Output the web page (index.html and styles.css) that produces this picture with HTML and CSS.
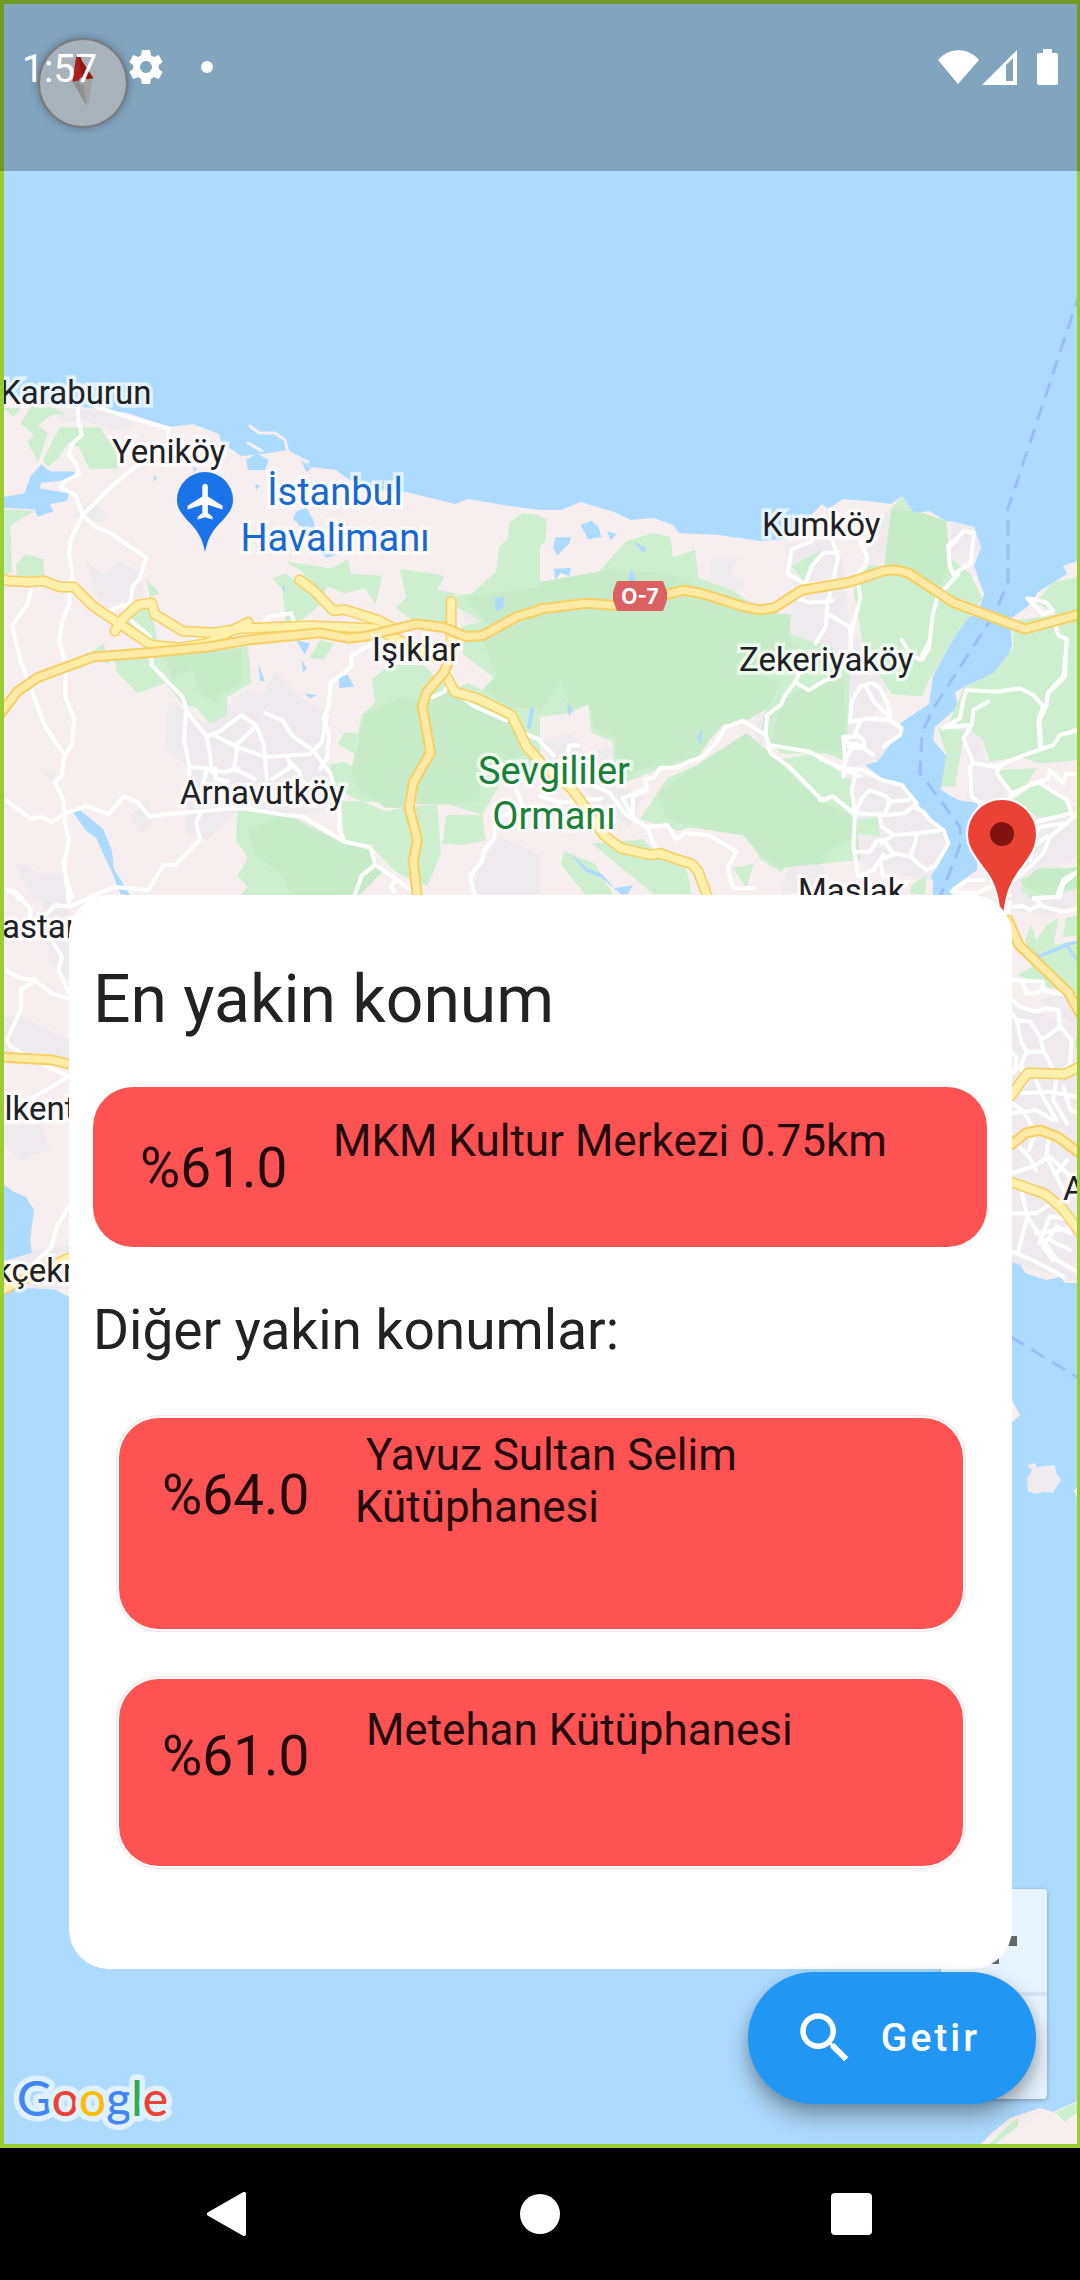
FILE: index.html
```html
<!DOCTYPE html>
<html lang="tr">
<head>
<meta charset="utf-8">
<meta name="viewport" content="width=device-width, initial-scale=1">
<title>En yakin konum</title>
<link rel="stylesheet" href="styles.css">
</head>
<body>
<div class="screen">
  <main class="stage">
    <svg class="map" viewBox="0 0 1080 2148" preserveAspectRatio="xMidYMin slice" role="img" aria-label="Harita">
      <defs>
        <g id="highways">
          <g transform="translate(0 340) scale(.3444 .3571)">
            <path d="M-20 660 20 674 90 678 125 674 175 692 215 692 270 745 340 790 440 855 520 862 600 850 720 790"/>
            <path d="M334 815 352 785 400 742 440 736 450 768 530 815 620 820 700 808 900 800 1090 808 1200 860 1260 890"/>
            <path d="M870 672 910 700 968 758 1000 755 1100 785 1140 805"/>
            <path d="M1310 732V880L1290 930 1320 985 1390 1005 1485 1050 1530 1140 1568 1180"/>
          </g>
          <g transform="translate(540 280) scale(.3444 .4082)">
            <path d="M0 1185 90 1245 130 1290 185 1360 235 1392 320 1408 350 1405 400 1420 440 1430 460 1450 490 1520"/>
          </g>
          <path d="M1011 1096 1022 1080 1028 1073 1065 1074 1085 1064M1011 1182 1045 1194 1062 1208 1082 1235M0 1291 32 1275 69 1258"/>
        </g>
        <g id="motorways">
          <g transform="translate(0 340) scale(.3444 .3571)">
            <path d="M-10 1060 50 985 110 945 270 888 440 875 600 860 720 840 930 820 1010 835 1060 830 1210 795 1290 805 1350 830 1400 828 1500 775 1570 755"/>
            <path d="M1310 880 1290 930 1240 985 1226 1025 1250 1155 1200 1240 1188 1310 1212 1400 1200 1460 1214 1580"/>
          </g>
          <g transform="translate(540 280) scale(.3444 .4082)">
            <path d="M0 806 135 792 215 797 370 770 415 760 470 768 590 800 640 808 680 803 760 760 900 740 1000 712 1035 710 1070 718 1200 790 1408 855 1580 816"/>
          </g>
          <path d="M1008 920 1019 945 1068 992 1085 1022M1011 1145 1026 1133 1040 1130 1058 1137 1085 1157M0 1057 52 1060 69 1064"/>
        </g>
      </defs>

      <rect class="water" width="1080" height="2148"/>

      <g class="land">
        <path d="M0 396 50 404 92 408 128 413 169 427 193 424 219 434 221 442 241 456 262 454 288 450 310 467 336 470 351 481 379 490 406 492 455 504 468 499 503 505 540 510 561 510 581 502 614 512 631 520 654 518 673 525 679 533 719 535 760 541 788 539 822 504 828 509 843 499 867 501 891 504 902 496 914 513 929 511 946 521 974 527 981 547 974 566 984 594 977 615 967 617 952 641 933 676 929 704 902 722 883 747 866 766 887 782 903 785 917 803 937 828 948 842 935 870 925 872 933 880 930 1290 69 1297 52 1288 21 1287 0 1291Z"/>
        <path d="M1080 560 1063 566 1067 574 1038 592 1027 607 1010 619 1012 645 1005 668 991 676 970 684 955 692 958 707 935 727 933 740 947 757 941 790 958 800 978 803 977 870 952 888 948 1250 1011 1262 1020 1263 1025 1273 1046 1280 1060 1277 1065 1283 1080 1283Z"/>
        <path d="M977 2148 993 2132 1010 2118 1040 2108 1053 2112 1080 2100V2148ZM1011 1398 1020 1415 1011 1423ZM1074 1490 1080 1486V1505Z"/>
      </g>
      <path class="urban" d="M1027 1465 1036 1463 1036 1467 1055 1465 1056 1472 1061 1480 1053 1493 1042 1492 1036 1494 1028 1491 1027 1478 1032 1470Z"/>
      <path class="park" d="M985 2148 1010 2124 1018 2118V2126L994 2145ZM1043 2123 1055 2112 1065 2122 1078 2112V2102L1052 2114Z"/>

      <g class="urban">
        <g transform="translate(0 340) scale(.3444 .3571)">
          <path d="M160 190 360 205 390 240 330 250 250 228 170 225ZM210 495 270 445 315 500 290 510ZM250 620 300 660 340 620 410 650 420 720 360 735 290 730ZM490 1010 600 1075 700 985 760 995 800 930 870 1000 960 1050 950 1180 1000 1290 880 1330 700 1310 600 1400 540 1380 550 1200 480 1140ZM40 1460 130 1500 200 1490V1568H100ZM1340 740 1370 735 1400 790 1350 795ZM1390 1480 1450 1390 1568 1440V1568H1370ZM380 1330 430 1290 440 1350 410 1385ZM120 1205 160 1215 150 1240Z"/>
        </g>
        <g transform="translate(540 280) scale(.3444 .4082)">
          <path d="M495 685 575 680 555 720 600 745 545 775 500 730ZM710 650 860 630 880 700 900 860 960 900 940 980 850 1000 760 940 720 860 740 770ZM900 930 1040 950 960 1080 1050 1100 980 1180 880 1200 870 1100 900 1080ZM630 1060 690 1070 680 1130 620 1155ZM960 600 1020 560 1000 690 950 710ZM1190 590 1260 605 1280 660 1200 710ZM0 1130 90 1110 130 1160 220 1140 210 1240 300 1260 260 1340 130 1250 60 1220ZM730 1410 780 1380 830 1450 800 1500H700ZM890 1210 1040 1230 1100 1290 1190 1380 1130 1470 1000 1450 920 1420 910 1300 930 1290Z"/>
        </g>
        <g transform="translate(820 640) scale(.3333)">
          <path d="M420 220 460 210 500 250 480 310 510 380 540 400 560 480 440 480 450 380 425 290ZM500 470 640 490 780 500V640L600 780H560L480 600ZM590 350 610 280 640 340Z"/>
        </g>
        <path d="M1011 880H1080V1283L1011 1262ZM0 1020 18 1015 69 1040V1060L0 1055ZM20 860 69 900V980L48 960 50 920ZM0 1125 40 1125 50 1150 20 1160 0 1140ZM0 1255 69 1245V1290L0 1287Z"/>
      </g>

      <path class="land" d="M1011 910 1050 915 1080 905V990L1040 1000 1080 1030 1011 1000Z"/>
      <g class="park">
        <g transform="translate(0 340) scale(.3444 .3571)">
          <path d="M10 190 60 190 40 215ZM90 185 160 190 190 208 150 210 110 240 140 262 110 340 80 285 100 265 60 235ZM175 245 290 245 310 275 330 280 345 360 260 362 230 300 200 285 170 330 140 355 125 340 150 285ZM12 475 100 478 30 520 35 650 12 660ZM45 630 75 600 125 615 130 662 50 662ZM425 672 465 710 435 720ZM790 665 830 655 900 700 880 650 830 620 960 640 1010 615 1020 655 1110 660 1090 740 1060 695 1000 710 950 690 930 740 870 790 830 790 820 700ZM1160 640 1290 660 1270 700 1330 710 1300 790 1200 790 1150 750 1180 720ZM1568 490 1520 485 1480 510 1475 555 1450 580 1440 650 1370 710 1320 715 1330 750 1400 790 1340 800 1345 880 1440 950 1420 990 1360 960 1320 980 1280 960 1230 910 1130 910 1080 950 1090 1015 1050 1050 1040 1100 1030 1200 1000 1180 960 1190 960 1240 1020 1280 1120 1320 1200 1305 1300 1300 1400 1330 1460 1230 1568 1210ZM380 740 440 760 460 855 400 850 370 790ZM260 880 300 850 320 910ZM330 880 560 870 720 860 730 960 660 1000 660 1050 610 1075 570 1030 530 1020 480 960 400 990 340 930ZM900 890 930 840 970 850 940 895ZM980 1130 1000 1100 1040 1100 1030 1160ZM690 1320 820 1320 1000 1410 1080 1430 1110 1490 1050 1510 1030 1568 690 1568 720 1530 690 1500 720 1450 685 1400ZM990 1290 1270 1300 1280 1440 1240 1530 1150 1490 1080 1420 1000 1400ZM1285 1410 1295 1330 1400 1330 1410 1400 1340 1415Z"/>
        </g>
        <g transform="translate(540 280) scale(.3444 .4082)">
          <path d="M0 580 20 585 15 640 0 655ZM0 740 160 725 250 640 330 620 380 630 385 680 450 660 460 730 560 760 640 810 720 820 730 870 850 900 900 960 890 1180 830 1160 700 1160 640 1110 660 1040 600 1020 520 1090 460 1170 340 1200 220 1240 210 1130 150 1110 140 1040 90 1060 0 1070ZM1020 560 1050 530 1085 570 1180 590 1190 680 1250 720 1285 780 1200 880 1130 980 1110 1020 1020 1015 940 900 910 760 950 700 1000 700ZM730 700 820 660 770 740ZM660 1180 800 1160 910 1230 930 1420 820 1430 730 1420 700 1450 640 1420 610 1370 520 1320 400 1350 290 1320 370 1220 480 1180ZM150 1380 300 1370 350 1420 420 1420 440 1505 330 1505ZM70 1400 160 1430 210 1505 130 1505 60 1430ZM560 1440 620 1430 600 1490ZM1550 730 1490 740 1440 790 1500 820 1370 835 1375 900 1320 960 1230 1000 1190 1080 1250 1100 1330 1160 1450 1140 1568 1090V730ZM1160 1110 1220 1110 1200 1240 1165 1240 1180 1160Z"/>
        </g>
        <g transform="translate(820 640) scale(.3333)">
          <path d="M355 265 435 270 405 440 365 430 382 350ZM500 260 620 230 700 280 780 270V360L660 370 600 350 510 365 490 310ZM530 390 650 385 610 450 560 450ZM580 480 650 430 740 480 750 530 650 530ZM600 720 660 690 780 680V740L680 780H630ZM105 540 175 530 180 590 110 580ZM275 735 320 705 315 765 270 760Z"/>
        </g>
        <path d="M1020 890 1040 868 1080 868V890L1050 888 1040 900ZM1025 940 1031 925 1036 940 1047 925 1058 918 1054 945 1080 940V1000L1062 993 1035 960ZM1080 915V935L1063 937 1066 918ZM1018 975 1035 965 1075 990 1050 988ZM1074 1045 1080 1030V1055Z"/>
      </g>
      <g class="forest">
        <g transform="translate(0 340) scale(.3444 .3571)">
          <path d="M480 880 700 865 700 960 620 1010 580 990 560 920 500 950ZM1060 1050 1160 1000 1220 1010 1250 1150 1190 1240 1180 1310 1120 1310 1040 1260 1020 1200ZM1240 1020 1300 980 1350 1010 1470 1060 1530 1160 1400 1200 1390 1290 1320 1300 1210 1300ZM1400 830 1568 760V1030L1480 1030 1400 980 1440 940ZM720 1370 820 1330 1000 1410 1080 1430 1110 1490 1030 1568H850L820 1500 740 1440ZM1350 720 1568 690V740L1420 800Z"/>
        </g>
        <g transform="translate(540 280) scale(.3444 .4082)">
          <path d="M0 740 200 710 380 720 480 760 640 815 730 820 720 870 740 900 600 960 700 980 660 1050 600 1080 530 1090 450 1170 330 1190 220 1220 220 1120 160 1100 140 1040 90 1050 60 980 0 1060ZM1020 560 1110 570 1180 590 1190 690 1160 750 1080 710 1000 700ZM700 1030 760 1000 880 970 890 1160 780 1150 670 1140ZM670 1160 750 1230 820 1280 900 1310 910 1370 850 1390 820 1430 700 1440 640 1410 590 1360 430 1340 370 1320 340 1260 470 1180 600 1110ZM1400 1480 1440 1445 1568 1440V1480L1480 1510Z"/>
        </g>
      </g>

      <g class="water">
        <g transform="translate(0 340) scale(.3444 .3571)">
          <path d="M10 440 70 430 90 380 120 348 145 368 215 368 220 385 170 395 120 400 115 415 200 430 195 450 145 460 155 480 110 495 100 475 10 470ZM715 335 745 318 780 335 770 365 720 365ZM860 480 890 470 910 505 920 550 880 530 850 500ZM740 405 755 405 745 420ZM875 340 905 360 890 370ZM925 590 985 600 950 610ZM1435 722 1465 720 1460 750 1440 760ZM860 840 900 850 885 880ZM875 895 890 920 880 930ZM750 905 768 955 755 955ZM985 945 1010 938 1028 970 985 975ZM885 990 920 995 900 1003ZM1540 1030 1552 1030 1540 1090 1530 1085ZM210 1320 235 1318 300 1370 325 1430 330 1480 378 1555 350 1552 325 1490 300 1440 280 1395 250 1375ZM445 382 455 382 450 398ZM820 690 828 685 824 710ZM560 355 572 360 564 370Z"/>
        </g>
        <g transform="translate(540 280) scale(.3444 .4082)">
          <path d="M118 600 150 590 170 605 178 630 140 635ZM38 655 45 630 90 630 85 645 50 675ZM195 615 222 622 205 638ZM40 708 90 705 85 725 60 718 45 735ZM270 640 310 658 300 668ZM255 740 265 705 280 735ZM78 1035 95 1050 85 1070ZM455 1120 472 1098 468 1138ZM85 1402 135 1440 180 1455 215 1490 270 1483 255 1505H235L180 1465 130 1448Z"/>
        </g>
        <path d="M0 1182 14 1192 26 1197 34 1210 30 1240 32 1253 0 1262Z"/>
      </g>
      <g class="stream">
        <path d="M1031 952 1040 956 1060 948 1072 943 1080 942M1066 944 1080 964"/>
      </g>

      <g class="coast">
        <path d="M250 426 259 433 275 433 285 440 288 452 308 462M248 443 262 451"/>
      </g>

      <g class="roads">
        <g transform="translate(0 340) scale(.3444 .3571)">
          <path d="M225 185 228 230 238 265 210 290 200 320 220 345 230 375 190 395 175 412 220 435 240 490 205 560 200 600 210 650 200 740 180 790 172 850 190 900 190 1000 215 1060 210 1130 185 1170 180 1220 160 1238 185 1290 190 1360 200 1400 185 1480 210 1560"/>
          <path d="M275 185 380 218 490 247 485 300 400 350 330 405 240 490 280 525 320 540 425 610 405 670 385 690 380 730 360 760 385 790 435 830 440 910 490 960 530 1000 545 1045 600 1110 610 1160 615 1210"/>
          <path d="M90 700 80 740 35 800 60 900 130 1080 185 1160M310 762 360 742M730 800 755 800 780 775 845 765 855 795M10 1285 90 1340 120 1335 150 1350 190 1325 250 1305 315 1328 360 1278 400 1295 435 1335 480 1328 700 1310 830 1330 880 1335 1000 1405 1075 1420 1090 1470 1150 1510 1210 1550"/>
          <path d="M600 1110 640 1095 700 1050 745 1080 765 1130 775 1230M625 1108 690 1140 770 1168 860 1162 900 1160 935 1125 950 1050 940 1090M770 1045 820 1065 850 1110 910 1150 960 1215 985 1310 985 1370 1000 1405M745 1080 690 1130 680 1200 740 1230M1080 850 1020 885 1020 915 960 960 955 1020 940 1060 955 1100 950 1170 930 1200M550 1195 600 1200 650 1210 690 1200M540 1040 535 1120 550 1195 548 1240M625 1200 625 1230 660 1235M590 1240 600 1205M835 1170 845 1195 790 1230M845 1185 870 1210 880 1240M585 1320 570 1350 580 1400 510 1470 475 1470 430 1540 330 1532 260 1560M1090 1470 1050 1500 1025 1568M1150 1510 1135 1530 1145 1545M1500 1260 1520 1310 1440 1340 1435 1395 1405 1430 1400 1460 1365 1500 1380 1560M1568 1120 1530 1105M1255 1000 1290 985 1310 950 1310 930M1320 985 1375 1025 1470 1065M12 1540 45 1545 55 1568"/>
        </g>
        <g transform="translate(540 280) scale(.3444 .4082)">
          <path d="M790 640 730 660 720 720 770 745 850 745M850 640 865 680 855 720 835 790 830 850 800 890M770 745 790 700 820 670 865 665M930 640 950 680 945 700 920 720 930 780 905 860 900 900M735 775 780 790 850 785M840 820 900 850 905 920M1200 640 1185 650 1190 700 1200 720 1250 695 1260 620 1230 615 1195 650M1215 720 1155 775 1140 820 1130 900 1110 930M870 970 830 980 780 1005 740 985 710 1020 700 1040 660 1065 655 1110 670 1160 720 1190 820 1275 850 1265 910 1305M740 985 755 960M655 1115 590 1080 540 1095 510 1135 470 1170 430 1180 400 1195 350 1195 330 1218 305 1225 310 1245 240 1270M670 1140 780 1155 880 1200 930 1215M240 1270 270 1315 270 1265 310 1250M160 1240 200 1255 250 1310 310 1340 370 1335 395 1370 420 1355 490 1360 570 1400 545 1440 560 1490 620 1490M310 1340 340 1400M0 1265 60 1280 180 1270M0 1130 40 1165M80 1160 85 1140 110 1140M1495 840 1505 870 1530 880 1520 970 1475 1010 1470 1040 1450 1080 1455 1140M1415 780 1440 800 1460 820 1490 810 1470 790 1420 780"/>
        </g>
        <g transform="translate(820 640) scale(.3333)">
          <path d="M150 130 120 140 95 185 90 245 150 235 210 240 245 265M140 145 165 190 210 230 205 195 180 145 160 130M120 245 105 280 130 300 135 320 85 310 70 290 110 290M245 265 240 285 190 320M70 290 75 350 70 410M110 310 85 340 70 380M85 320 130 325 160 345M0 355 65 385 130 390 185 420 245 435 290 490 255 520 205 525 110 520 100 520M110 515 125 475 150 450 200 470 210 485 195 520M205 485 265 480M105 410 95 450 105 520 100 620 115 710M0 480 40 470 100 520M180 530 185 560 220 585 290 580 285 610 270 650 320 690 345 680 385 610 370 570 330 540 310 515 280 500M105 635 150 635 170 605 190 600 220 640 270 650M185 610 220 585M290 580 370 570M190 710 180 660 220 645M115 710 160 690 190 645M370 265 420 235 430 180 440 150 530 155 600 145 640 165 670 200 655 240 660 320M370 262 455 255 460 210 505 185M455 255 430 295 460 370 450 380 455 470 480 490M460 370 530 380 600 350 700 315 720 285 780 270M780 405 740 400 730 430 690 390 685 415 620 440 570 470M540 380 530 400 575 460 620 440M660 430 740 480 755 520 650 545M780 510 740 550 690 590 670 640 630 680 580 720M740 550 660 560 640 590M740 0 735 110 685 160 680 195 660 235M780 690 730 720 710 770 640 775M490 720 440 720 395 755 470 760 510 740M245 0 270 40 300 60 330 0M630 660 640 620 680 590"/>
        </g>
        <g transform="translate(980 780) scale(.3333)">
          <path d="M90 370 80 420M60 380 75 340 90 345M100 380 130 378 150 390 180 375 210 385 250 395 300 385M180 370 165 355 240 350 250 310 300 270M95 600 190 605 185 630 230 640 300 650M130 610 140 640 170 640 190 625M95 660 120 680 165 695 200 685 235 690 240 740 200 770 185 775M95 700 110 720 150 725 180 770 190 810 215 860M110 720 125 790 140 815 125 850 130 890M140 815 190 815M240 740 275 780 270 850 250 870M95 820 110 830 105 870"/>
        </g>
        <g transform="translate(540 1060) scale(.3444 .3333)">
          <path d="M1370 130 1400 150 1430 200M1400 100 1480 95 1560 110M1440 60 1460 110 1500 180M1500 50 1490 120 1530 190M1370 240 1420 290 1440 330M1370 340 1430 320 1480 290 1560 370M1440 210 1420 270M1480 210 1470 290 1520 390M1370 460 1440 460 1500 420M1400 400 1415 470 1390 570M1415 470 1500 600 1568 640M1370 575 1430 600 1520 650M1440 520 1568 500M1450 550 1480 470 1568 480M1480 540 1540 570M1530 300 1500 340M1370 160 1440 150 1490 180M1490 600 1460 560 1500 500 1540 520M1520 80 1540 150 1568 160M1370 40 1400 10"/>
        </g>
        <g transform="translate(0 860) scale(.3444 .3333)">
          <path d="M270 110 200 140 160 135 100 200M12 90 50 100 90 150 85 180M12 330 60 355 100 360 150 400 200 415M100 365 60 390 60 450 20 540 30 560 100 600 200 650 100 710 12 740M150 240 180 290 170 330 200 400M185 0 200 130M200 1040 165 1100 150 1160 100 1210"/>
        </g>
      </g>

      <path class="ferry" d="M1080 292 1008 509V582L995 613 933 709 922 733 920 773 960 827 961 843 940 897M1011 1337 1080 1379"/>

      <use href="#highways" class="casing"/>
      <use href="#highways" class="highway"/>
      <use href="#motorways" class="casing"/>
      <use href="#motorways" class="motorway"/>

      <path class="shield" d="M617 581H663L667 592V600L663 611H617L613 600V592Z"/>
      <text class="shield-text" x="640" y="604">O-7</text>

      <g class="place">
        <text x="0" y="404">Karaburun</text>
        <text x="112" y="463">Yeniköy</text>
        <text x="372" y="661">Işıklar</text>
        <text x="180" y="804">Arnavutköy</text>
        <text x="762" y="536">Kumköy</text>
        <text x="739" y="671">Zekeriyaköy</text>
        <text x="798" y="902">Maslak</text>
        <text x="2" y="938">astar</text>
        <text x="-17" y="1120">Alkent</text>
        <text x="-5" y="1282">kçekm</text>
        <text x="1063" y="1200">A</text>
      </g>
      <g class="place poi airport">
        <text x="335" y="505">İstanbul</text>
        <text x="335" y="551">Havalimanı</text>
      </g>
      <g class="place poi woods">
        <text x="554" y="784">Sevgililer</text>
        <text x="554" y="829">Ormanı</text>
      </g>

      <path fill="#1a73e8" d="M205 552C202 536 196 529 187 520 181 513 177 508 177 500A28 28 0 0 1 233 500C233 508 229 513 223 520 214 529 208 536 205 552Z"/>
      <path fill="#fff" transform="translate(183 480) scale(1.84)" d="M21.500 16v-2l-8-5V3.500C13.500 2.670 12.830 2 12 2s-1.500.67-1.500 1.500V9l-8 5v2l8-2.500V18l-2.500 2v1.500L12 20.300l4 1.200V20l-2.500-2v-4.500l8 2.500z"/>

      <path fill="#ea4335" stroke="#fff" stroke-width="2" d="M1000 916C998 893 993 880 983 868 973 854 967 847 967 834A35 35 0 0 1 1037 834C1037 847 1032 854 1022 868 1012 880 1006 893 1004 916Z"/>
      <circle cx="1002" cy="834" r="12" fill="#811411"/>

      <g class="logo">
        <text x="17" y="2116"><tspan fill="#4285f4">G</tspan><tspan fill="#ea4335">o</tspan><tspan fill="#fbbc05">o</tspan><tspan fill="#4285f4">g</tspan><tspan fill="#34a853">l</tspan><tspan fill="#ea4335">e</tspan></text>
      </g>
    </svg>

    <button class="compass" type="button" aria-label="Pusula">
      <svg viewBox="0 0 90 90" aria-hidden="true">
        <path fill="#e02a24" d="M38 16 43 18 47 41 34 44Z"/><path fill="#c81a12" d="M40 16 56 40 45 42Z"/>
        <path fill="#c0c0c0" d="M34 44 45 42 49 69Z"/><path fill="#d8d4d4" d="M45 42 55 40 50 69Z"/>
        <circle cx="45" cy="43" r="4" fill="#d8e4ec"/>
      </svg>
    </button>

    <div class="zoom">
      <button type="button" aria-label="Yakınlaştır"><svg viewBox="0 0 46 46" aria-hidden="true"><path d="M18 0h10v18h18v10H28v18H18V28H0V18h18z"/></svg></button>
      <button type="button" aria-label="Uzaklaştır"><svg viewBox="0 0 46 46" aria-hidden="true"><path d="M0 18h46v10H0z"/></svg></button>
    </div>

    <div class="frame"></div>

    <header class="status">
      <span class="clock">1:57</span>
      <svg class="gear" viewBox="2 2 20 20" aria-hidden="true"><path d="M19.430 12.980c.04-.32.07-.64.07-.98s-.03-.66-.07-.98l2.110-1.650c.19-.15.24-.42.12-.64l-2-3.460c-.12-.22-.39-.3-.61-.22l-2.490 1c-.52-.4-1.080-.73-1.690-.98l-.38-2.650C14.460 2.180 14.250 2 14 2h-4c-.25 0-.46.18-.49.42l-.38 2.650c-.61.25-1.170.59-1.690.98l-2.490-1c-.23-.09-.49 0-.61.22l-2 3.460c-.13.22-.07.49.12.64l2.110 1.650c-.04.32-.07.65-.07.98s.03.66.07.98l-2.110 1.650c-.19.15-.24.42-.12.64l2 3.460c.12.22.39.3.61.22l2.490-1c.52.4 1.080.73 1.690.98l.38 2.650c.03.24.24.42.49.42h4c.25 0 .46-.18.49-.42l.38-2.650c.61-.25 1.170-.59 1.690-.98l2.490 1c.23.09.49 0 .61-.22l2-3.460c.12-.22.07-.49-.12-.64l-2.110-1.650zM12 15.500c-1.930 0-3.500-1.570-3.500-3.500s1.570-3.500 3.500-3.500 3.500 1.570 3.500 3.500-1.570 3.500-3.500 3.500z"/></svg>
      <span class="dot"></span>
      <span class="signals">
        <svg width="41" height="36" viewBox="0 0 41 36" aria-hidden="true"><path d="M20 35 0 11C11-2 30-2 41 11Z"/></svg>
        <svg width="36" height="36" viewBox="0 0 36 36" aria-hidden="true"><path fill-rule="evenodd" d="M0 36 35 1V36ZM24 16V32H31V9Z"/></svg>
        <svg class="battery" width="21" height="36" viewBox="0 0 21 36" aria-hidden="true"><path d="M6 0H15V4H19Q21 4 21 6V34Q21 36 19 36H2Q0 36 0 34V6Q0 4 2 4H6Z"/></svg>
      </span>
    </header>

    <section class="panel">
      <h1>En yakin konum</h1>
      <article class="place-card nearest">
        <span class="score">%61.0</span>
        <span class="name">MKM Kultur Merkezi 0.75km</span>
      </article>
      <h2>Diğer yakin konumlar:</h2>
      <ul class="others">
        <li class="place-card tall">
          <span class="score">%64.0</span>
          <span class="name">&nbsp;Yavuz Sultan Selim Kütüphanesi</span>
        </li>
        <li class="place-card">
          <span class="score">%61.0</span>
          <span class="name">&nbsp;Metehan Kütüphanesi</span>
        </li>
      </ul>
    </section>

    <button class="fetch" type="button">
      <svg viewBox="0 0 24 24" aria-hidden="true"><path d="M15.500 14h-.79l-.28-.27C15.410 12.590 16 11.110 16 9.500 16 5.910 13.090 3 9.500 3S3 5.910 3 9.500 5.910 16 9.500 16c1.610 0 3.090-.59 4.230-1.570l.27.28v.79l5 4.990L20.490 19l-4.990-5zm-6 0C7.010 14 5 11.990 5 9.500S7.010 5 9.500 5 14 7.010 14 9.500 11.990 14 9.500 14z"/></svg>
      Getir
    </button>
  </main>

  <nav class="system-nav">
    <button type="button" aria-label="Geri"><svg viewBox="0 0 44 44" aria-hidden="true"><path d="M3 22 38 2V42Z" stroke="#fff" stroke-width="4" stroke-linejoin="round"/></svg></button>
    <button type="button" aria-label="Ana ekran"><svg viewBox="0 0 44 44" aria-hidden="true"><circle cx="22" cy="22" r="20"/></svg></button>
    <button type="button" aria-label="Son uygulamalar"><svg viewBox="0 0 44 44" aria-hidden="true"><rect x="1" y="1" width="41" height="42" rx="4"/></svg></button>
  </nav>
</div>
</body>
</html>
```
FILE: styles.css
```css
* {
  box-sizing: border-box;
}

body {
  margin: 0;
  font-family: Roboto, "Noto Sans", sans-serif;
  background: #000;
}

button {
  margin: 0;
  padding: 0;
  border: 0;
  font: inherit;
  cursor: pointer;
}

h1,
h2,
ul {
  margin: 0;
  padding: 0;
  font-weight: 400;
  list-style: none;
}

.screen {
  display: flex;
  flex-direction: column;
  min-height: 100vh;
}

.stage {
  position: relative;
  flex: 1;
  display: flex;
  flex-direction: column;
  justify-content: space-between;
  padding-bottom: 179px;
  overflow: hidden;
}

/* Map */
.map {
  position: absolute;
  inset: 0;
  width: 100%;
  height: 100%;
}

.water { fill: #addbff; }
.land { fill: #f7eeef; }
.urban { fill: #efeaee; }
.park { fill: #cdeecf; }
.forest { fill: #c7ebc8; }

.stream,
.coast,
.roads,
.ferry,
.casing,
.highway,
.motorway {
  fill: none;
  stroke-linecap: round;
  stroke-linejoin: round;
}

.stream { stroke: #addbff; stroke-width: 3px; }
.coast { stroke: #f7eeef; stroke-width: 3px; }
.roads { stroke: #fff; stroke-width: 4px; }
.ferry { stroke: #97bffa; stroke-width: 3px; stroke-dasharray: 15 9; stroke-linecap: butt; }
.casing { stroke: #f8cf62; stroke-width: 11px; }
.highway { stroke: #fff0ae; stroke-width: 8px; }
.motorway { stroke: #ffe9a6; stroke-width: 7px; }

.map path {
  vector-effect: non-scaling-stroke;
}

.shield { fill: #db6061; }

.shield-text {
  fill: #fff;
  font-family: Inter, sans-serif;
  font-size: 21px;
  font-weight: 700;
  text-anchor: middle;
}

.place text {
  fill: #202124;
  font-size: 33px;
  paint-order: stroke;
  stroke: rgba(255, 255, 255, 0.7);
  stroke-width: 7px;
}

.place.poi text {
  font-size: 38px;
  text-anchor: middle;
}

.airport text { fill: #1967d2; }
.woods text { fill: #188038; }

.logo text {
  font-family: Lato, sans-serif;
  font-size: 48px;
  font-weight: 500;
  paint-order: stroke;
  stroke: #dff0ff;
  stroke-width: 11px;
  stroke-linejoin: round;
}

/* Map controls */
.compass {
  position: absolute;
  top: 38px;
  left: 38px;
  width: 90px;
  height: 90px;
  border: 2px solid #a4a4a4;
  border-radius: 50%;
  background: #e0eef9;
  box-shadow: 0 0 8px rgba(0, 0, 0, 0.3);
}

.compass svg {
  display: block;
}

.zoom {
  position: absolute;
  right: 33px;
  bottom: 49px;
  width: 106px;
  border-radius: 4px;
  background: rgba(255, 255, 255, 0.7);
  box-shadow: 0 1px 4px rgba(0, 0, 0, 0.3);
}

.zoom button {
  display: grid;
  place-items: center;
  width: 100%;
  height: 103px;
  background: none;
}

.zoom button + button {
  height: 107px;
  border-top: 4px solid #d5e3f0;
}

.zoom svg {
  width: 46px;
  fill: #666;
}

.frame {
  position: absolute;
  inset: 0;
  border: 4px solid #9acd32;
  border-width: 4px 3px 4px 4px;
}

/* Status bar */
.status {
  position: relative;
  display: flex;
  align-items: flex-start;
  height: 171px;
  padding: 49px 22px 0;
  background: rgba(0, 0, 0, 0.25);
}

.status svg {
  fill: #fff;
}

.clock {
  width: 107px;
  font-size: 39px;
  line-height: 40px;
  color: #fff;
}

.status .gear {
  width: 34px;
  height: 36px;
}

.dot {
  width: 12px;
  height: 12px;
  margin: 12px 0 0 38px;
  border-radius: 50%;
  background: #fff;
}

.signals {
  display: flex;
  gap: 3px;
  margin-left: auto;
}

.battery {
  margin-left: 16px;
}

/* Results panel */
.panel {
  position: relative;
  margin: 0 68px 0 69px;
  padding: 66px 25px 103px 24px;
  border-radius: 40px;
  background: #fff;
  color: #222;
}

.panel h1 {
  font-size: 66px;
  line-height: 78px;
}

.panel h2 {
  margin: 51px 0 56px;
  font-size: 55px;
  line-height: 64px;
}

.place-card {
  display: flex;
  align-items: flex-start;
  min-height: 187px;
  padding: 25px 20px 0 43px;
  border-radius: 40px;
  background: #ff5252;
  color: #220b0b;
}

.score {
  width: 193px;
  margin-top: 20px;
  flex: none;
  font-size: 55px;
  line-height: 64px;
}

.name {
  flex: 1;
  font-size: 44px;
  line-height: 52px;
}

.nearest {
  min-height: 160px;
  margin-top: 48px;
  padding: 28px 20px 0 47px;
}

.nearest .score {
  margin-top: 21px;
}

.tall {
  min-height: 211px;
  padding-top: 11px;
}

.tall .score {
  margin-top: 34px;
}

.others {
  display: flex;
  flex-direction: column;
  gap: 50px;
  margin: 0 24px 0 26px;
}

.others .place-card {
  box-shadow: 0 0 0 2px #fff, 0 0 0 3px #ffe0e0;
}

/* Fetch button */
.fetch {
  position: absolute;
  right: 44px;
  bottom: 44px;
  display: flex;
  align-items: center;
  gap: 23px;
  height: 132px;
  padding: 0 56px 0 44px;
  border-radius: 66px;
  background: #2196f3;
  color: #fff;
  font-size: 39px;
  font-weight: 500;
  letter-spacing: 3px;
  box-shadow: 0 14px 24px rgba(0, 0, 0, 0.28), 0 4px 12px rgba(0, 0, 0, 0.15);
}

.fetch svg {
  width: 66px;
  height: 66px;
  fill: #fff;
}

/* System navigation */
.system-nav {
  display: flex;
  justify-content: center;
  gap: 180px;
  height: 132px;
  background: #000;
}

.system-nav button {
  display: grid;
  place-items: center;
  width: 132px;
  background: none;
}

.system-nav svg {
  width: 44px;
  fill: #fff;
}
```
